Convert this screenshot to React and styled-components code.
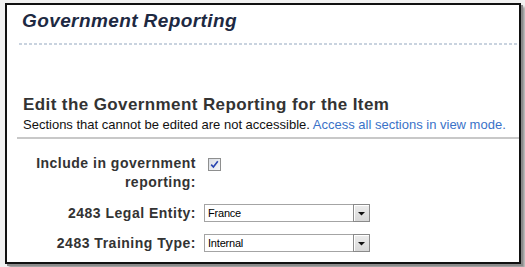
import React from "react";
import styled, { createGlobalStyle } from "styled-components";

const Global = createGlobalStyle`
  html, body { margin: 0; padding: 0; }
  body {
    background: #f1f1f1;
    font-family: "Liberation Sans", Arial, sans-serif;
    width: 525px;
    height: 267px;
    overflow: hidden;
  }
`;

const Frame = styled.div`
  box-sizing: border-box;
  margin: 3px 0 0 5px;
  width: 516px;
  height: 261px;
  background: #fff;
  border: 2px solid #111;
  box-shadow: 2px 2px 0 #8a8a8a, 4px 4px 2px rgba(0, 0, 0, 0.35);
  display: flex;
  flex-direction: column;
`;

const Title = styled.h1`
  margin: 0;
  padding: 5px 0 0 15px;
  font-size: 19px;
  line-height: 22px;
  font-weight: bold;
  font-style: italic;
  letter-spacing: 0.4px;
  color: #1d2942;
`;

const DashedRule = styled.div`
  height: 2px;
  margin: 11px 2px 0 12px;
  background: repeating-linear-gradient(to right, #c9d3df 0 3px, transparent 3px 5px);
`;

const Section = styled.section`
  padding: 51px 0 0 16px;
`;

const Heading = styled.h2`
  margin: 0;
  font-size: 17px;
  line-height: 18px;
  font-weight: bold;
  letter-spacing: 0.4px;
  color: #333;
`;

const Note = styled.p`
  margin: 3px 0 0;
  font-size: 13px;
  line-height: 15px;
  color: #111;
`;

const Link = styled.a`
  color: #3a72c8;
  text-decoration: none;
`;

const Rule = styled.div`
  height: 2px;
  margin: 5px 0 0 10px;
  background: #c8c8c8;
`;

const Form = styled.div`
  display: grid;
  grid-template-columns: 189px 1fr;
  column-gap: 8px;
  row-gap: 12px;
  padding-top: 15px;
`;

const Label = styled.div`
  text-align: right;
  font-size: 14px;
  line-height: ${(p) => (p.$tall ? "19px" : "18px")};
  font-weight: bold;
  letter-spacing: 0.5px;
  color: #333;
  padding-left: ${(p) => (p.$tall ? "28px" : "0")};
`;

const Control = styled.div`
  display: flex;
  align-items: flex-start;
`;

const CheckBox = styled.span`
  box-sizing: border-box;
  width: 13px;
  height: 13px;
  margin: 4px 0 0 4px;
  border: 1px solid #8e8f8f;
  background: linear-gradient(135deg, #d9dde4, #f4f5f7);
  display: flex;
  align-items: center;
  justify-content: center;
`;

const Select = styled.div`
  box-sizing: border-box;
  width: 166px;
  height: 18px;
  border: 1px solid #a4a4a4;
  background: #fff;
  display: flex;
  align-items: stretch;
`;

const SelectText = styled.span`
  flex: 1;
  padding-left: 3px;
  font-size: 11px;
  line-height: 16px;
  letter-spacing: -0.2px;
  color: #000;
`;

const SelectButton = styled.span`
  box-sizing: border-box;
  width: 17px;
  border: 1px solid #8a8a8a;
  margin: -1px -1px -1px 0;
  background: linear-gradient(#ececec, #d8d8d8);
  box-shadow: inset 1px 1px 0 #fff;
  display: flex;
  align-items: center;
  justify-content: center;
`;

const Arrow = () => (
  <svg width="7" height="5" viewBox="0 0 7 5">
    <path d="M0 1h7L3.5 4.5z" fill="#111" />
  </svg>
);

const Check = () => (
  <svg width="9" height="9" viewBox="0 0 9 9">
    <path d="M1.2 4.6 L3.4 7 L7.8 1.3" fill="none" stroke="#2744b0" strokeWidth="1.6" />
  </svg>
);

const Dropdown = ({ value }) => (
  <Select>
    <SelectText>{value}</SelectText>
    <SelectButton>
      <Arrow />
    </SelectButton>
  </Select>
);

export default function App() {
  return (
    <>
      <Global />
      <Frame>
        <Title>Government Reporting</Title>
        <DashedRule />
        <Section>
          <Heading>Edit the Government Reporting for the Item</Heading>
          <Note>
            Sections that cannot be edited are not accessible.{" "}
            <Link href="#">Access all sections in view mode.</Link>
          </Note>
        </Section>
        <Rule />
        <Form>
          <Label $tall>Include in government reporting:</Label>
          <Control>
            <CheckBox>
              <Check />
            </CheckBox>
          </Control>
          <Label>2483 Legal Entity:</Label>
          <Control>
            <Dropdown value="France" />
          </Control>
          <Label>2483 Training Type:</Label>
          <Control>
            <Dropdown value="Internal" />
          </Control>
        </Form>
      </Frame>
    </>
  );
}
